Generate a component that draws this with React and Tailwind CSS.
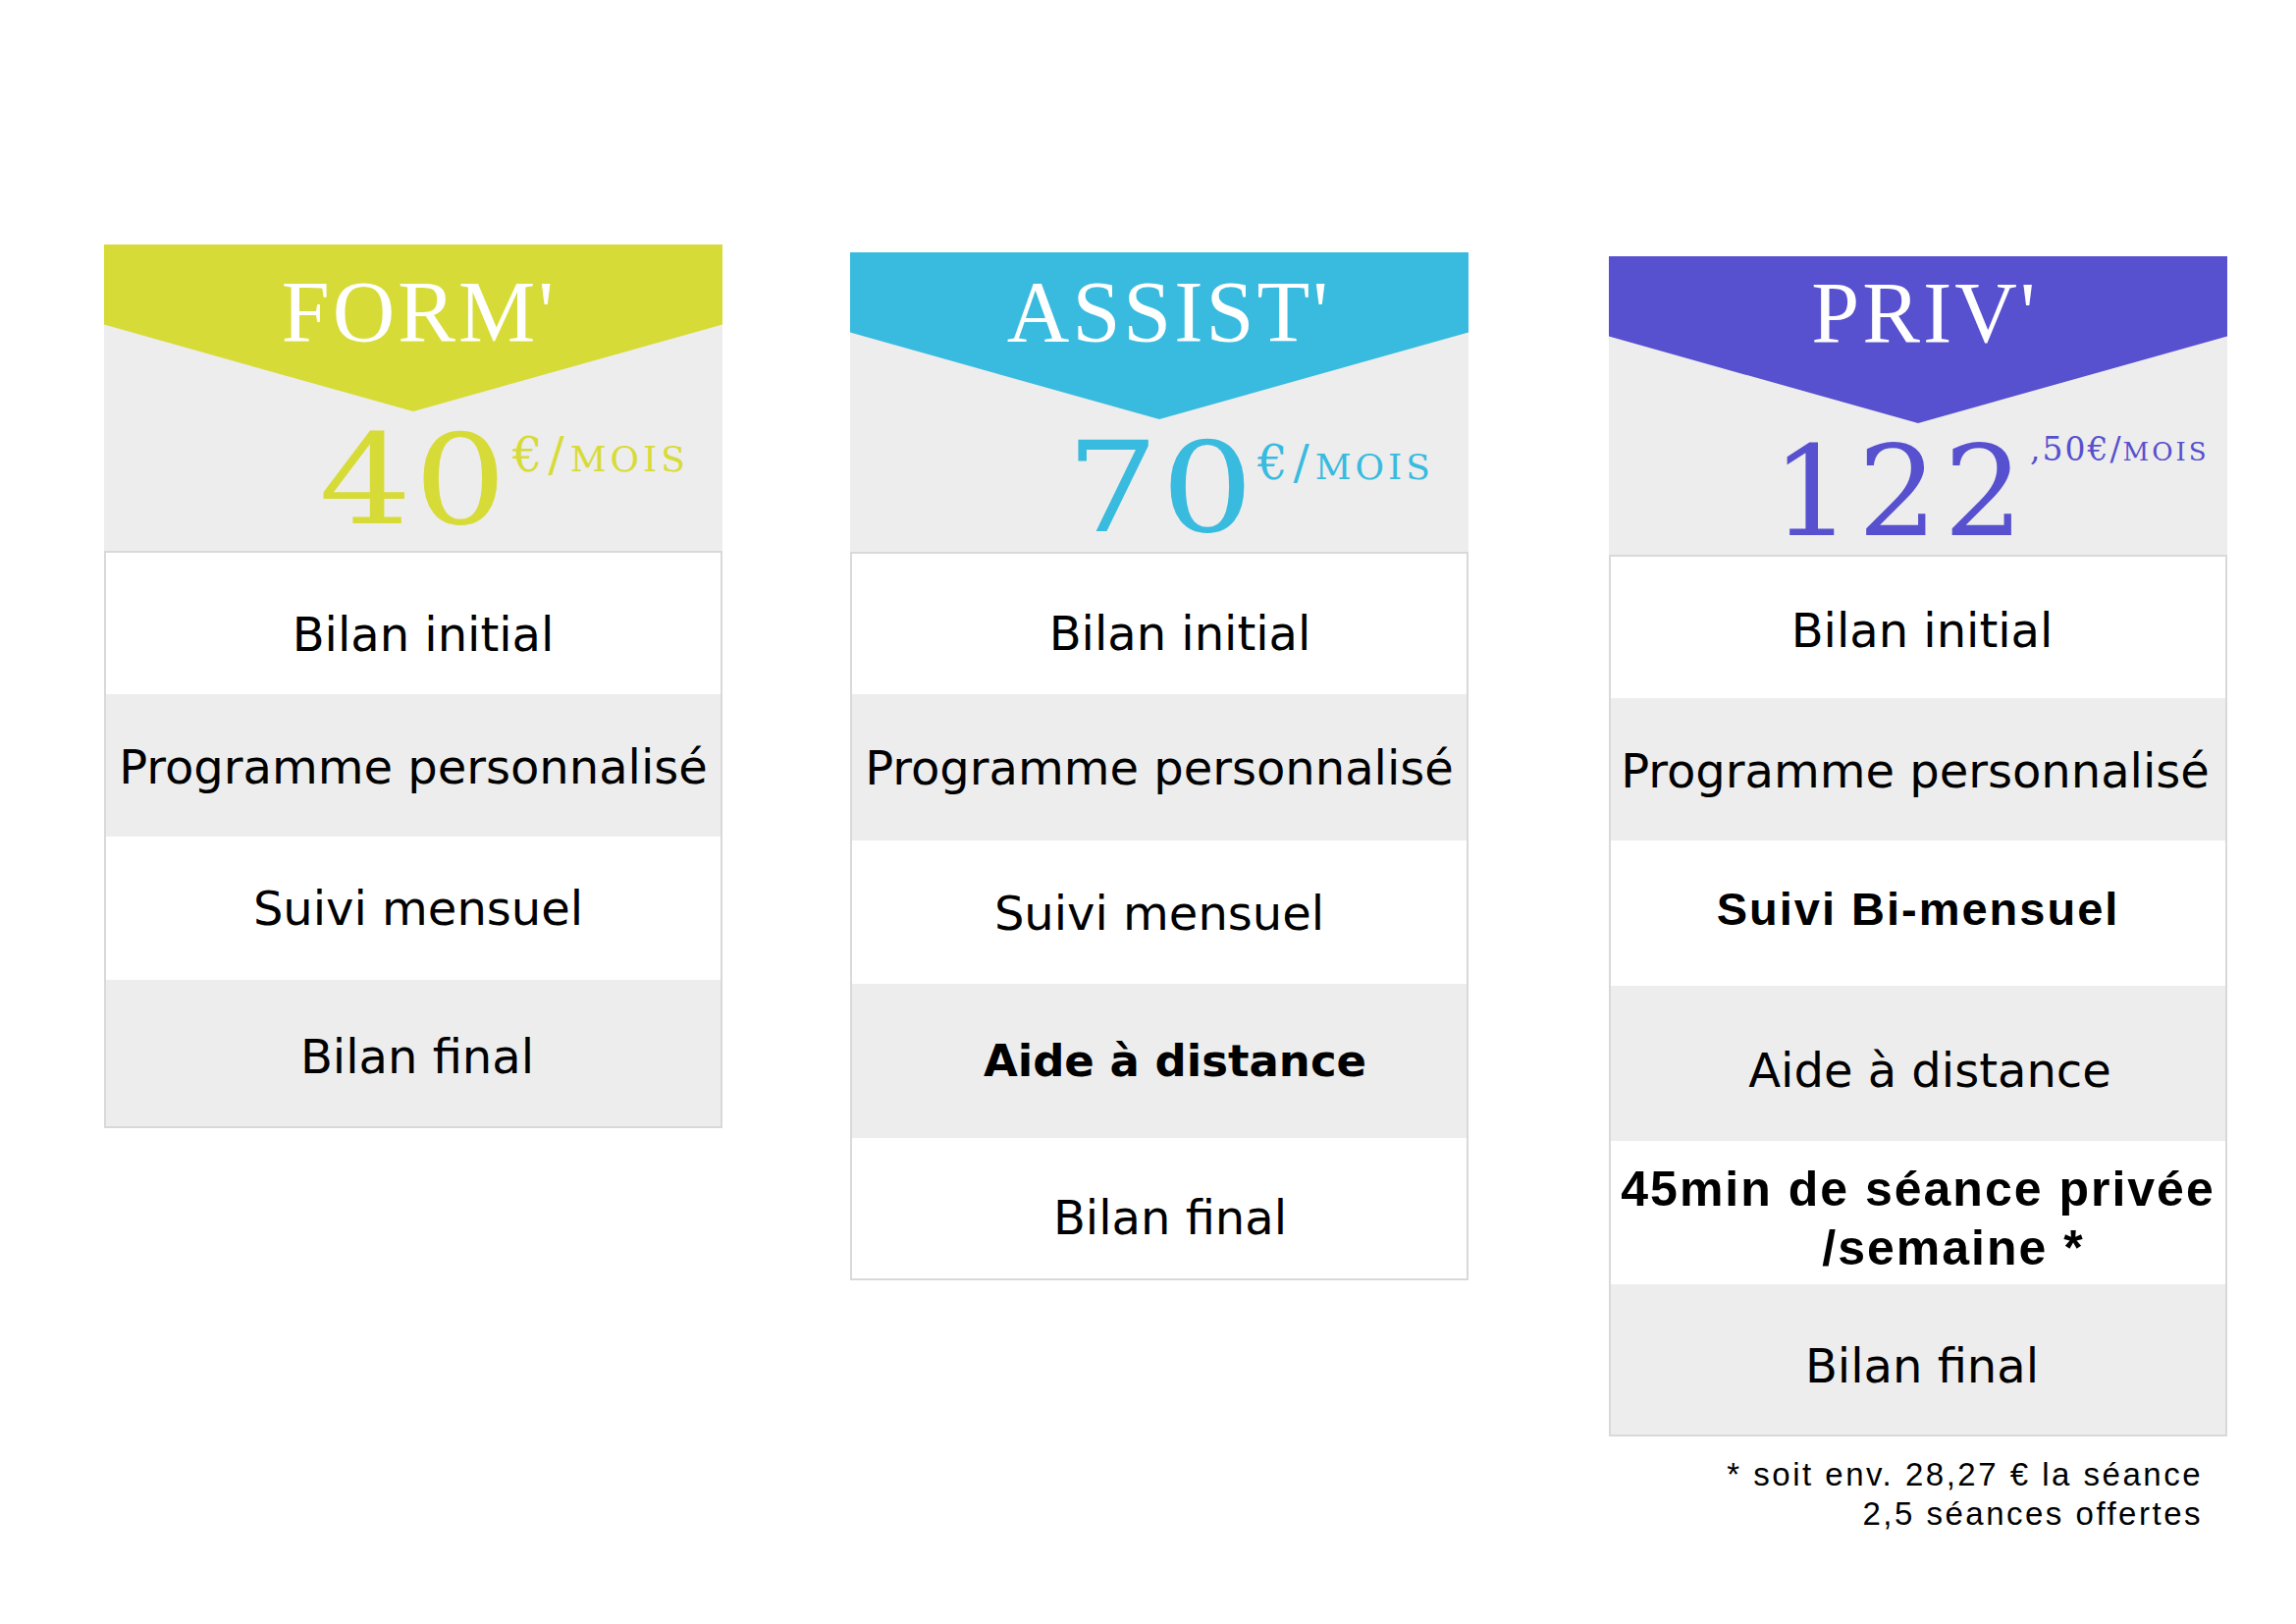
const plans = [
  {
    name: "FORM'",
    band: "bg-[#d7db37]",
    ink: "text-[#d7db37]",
    offset: "",
    headH: "h-[312px]",
    titlePt: "pt-[25px] pl-[12px]",
    priceRow: "pl-[219px]",
    amount: "40",
    boxW: "w-[197px]",
    numClass: "scale-x-[1.16] tracking-[2px]",
    supA: "€/",
    supAClass: "text-[48px] mt-[14px] tracking-[6px]",
    supB: "MOIS",
    supBClass: "text-[36px] tracking-[4px]",
    rows: [
      { label: "Bilan initial", h: "h-[144px]", cls: "text-[48px] pt-[22px] pl-[20px]" },
      { label: "Programme personnalisé", h: "h-[145px]", cls: "text-[48px] pt-[2px]" },
      { label: "Suivi mensuel", h: "h-[146px]", cls: "text-[48px] pl-[10px]" },
      { label: "Bilan final", h: "h-[149px]", cls: "text-[48px] pt-[6px] pl-[8px]" },
    ],
  },
  {
    name: "ASSIST'",
    band: "bg-[#39bbdf]",
    ink: "text-[#39bbdf]",
    offset: "ml-[130px] mt-[8px]",
    headH: "h-[305px]",
    titlePt: "pt-[17px] pl-[20px]",
    priceRow: "pl-[220px]",
    amount: "70",
    boxW: "w-[195px]",
    numClass: "scale-x-[1.16] tracking-[2px]",
    supA: "€/",
    supAClass: "text-[48px] mt-[14px] tracking-[6px]",
    supB: "MOIS",
    supBClass: "text-[36px] tracking-[4px]",
    rows: [
      { label: "Bilan initial", h: "h-[143px]", cls: "text-[48px] pt-[18px] pl-[42px]" },
      { label: "Programme personnalisé", h: "h-[149px]", cls: "text-[48px]" },
      { label: "Suivi mensuel", h: "h-[146px]", cls: "text-[48px] pt-[2px]" },
      { label: "Aide à distance", h: "h-[157px]", cls: "text-[45px] pl-[32px] font-bold" },
      { label: "Bilan final", h: "h-[143px]", cls: "text-[48px] pt-[18px] pl-[22px]" },
    ],
  },
  {
    name: "PRIV'",
    band: "bg-[#5750cf]",
    ink: "text-[#5750cf]",
    offset: "ml-[143px] mt-[12px]",
    headH: "h-[304px]",
    titlePt: "pt-[14px] pl-[14px]",
    priceRow: "pl-[166px]",
    amount: "122",
    boxW: "w-[263px]",
    numClass: "tracking-[6px]",
    supA: ",50€/",
    supAClass: "text-[33px] mt-[4px] tracking-[2px]",
    supB: "MOIS",
    supBClass: "text-[26px] tracking-[3px]",
    rows: [
      { label: "Bilan initial", h: "h-[144px]", cls: "text-[48px] pt-[6px] pl-[8px]" },
      { label: "Programme personnalisé", h: "h-[145px]", cls: "text-[48px] pt-[2px] pr-[6px]" },
      {
        label: "Suivi Bi-mensuel",
        h: "h-[148px]",
        cls: "font-['Liberation_Sans',sans-serif] font-bold text-[47px] tracking-[2px] pb-[9px]",
      },
      { label: "Aide à distance", h: "h-[158px]", cls: "text-[48px] pt-[14px] pl-[24px]" },
      { label: "45min", h: "h-[146px]", cls: "", special: true },
      { label: "Bilan final", h: "h-[153px]", cls: "text-[48px] pt-[12px] pl-[8px]" },
    ],
  },
]

function PlanCard({ plan }) {
  return (
    <div className={`w-[630px] shrink-0 flex flex-col ${plan.offset}`}>
      {/* header with chevron band */}
      <div className={`bg-[#ededed] ${plan.headH} flex flex-col`}>
        <div
          className={`h-[170px] ${plan.band} [clip-path:polygon(0_0,100%_0,100%_48%,50%_100%,0_48%)] flex justify-center ${plan.titlePt}`}
        >
          <span className="font-['Liberation_Serif',serif] text-[88px] leading-none tracking-[3px] text-white">
            {plan.name}
          </span>
        </div>
        <div className={`mt-[6px] flex items-start ${plan.priceRow} ${plan.ink} font-['DejaVu_Serif',serif]`}>
          <span className={`inline-block shrink-0 ${plan.boxW}`}>
            <span className={`inline-block origin-left text-[128px] leading-none ${plan.numClass}`}>{plan.amount}</span>
          </span>
          <span className={`leading-none whitespace-nowrap ${plan.supAClass}`}>
            {plan.supA}
            <span className={plan.supBClass}>{plan.supB}</span>
          </span>
        </div>
      </div>

      {/* feature list */}
      <div className="border-2 border-[#d9d9d9] flex flex-col">
        {plan.rows.map((row, i) => (
          <div
            key={i}
            className={`${row.h} ${i % 2 === 1 ? "bg-[#ededed]" : "bg-white"} flex items-center justify-center text-center`}
          >
            {row.special ? (
              <div className="font-['Liberation_Sans',sans-serif] font-bold text-[50px] leading-[60px] tracking-[2px] pt-[12px]">
                <div>45min de séance privée</div>
                <div className="pl-[72px]">/semaine *</div>
              </div>
            ) : (
              <span className={`font-['DejaVu_Sans',sans-serif] leading-none ${row.cls}`}>{row.label}</span>
            )}
          </div>
        ))}
      </div>

      {plan.amount === "122" && (
        <div className="mt-[19px] pr-[25px] text-right font-['Liberation_Sans',sans-serif] text-[33px] leading-[40px] tracking-[2.5px] text-black">
          <div>* soit env. 28,27 € la séance</div>
          <div>2,5 séances offertes</div>
        </div>
      )}
    </div>
  )
}

export default function App() {
  return (
    <div className="w-[2339px] h-[1654px] bg-white overflow-hidden">
      <div className="flex items-start pl-[106px] pt-[249px]">
        {plans.map((plan) => (
          <PlanCard key={plan.name} plan={plan} />
        ))}
      </div>
    </div>
  )
}
